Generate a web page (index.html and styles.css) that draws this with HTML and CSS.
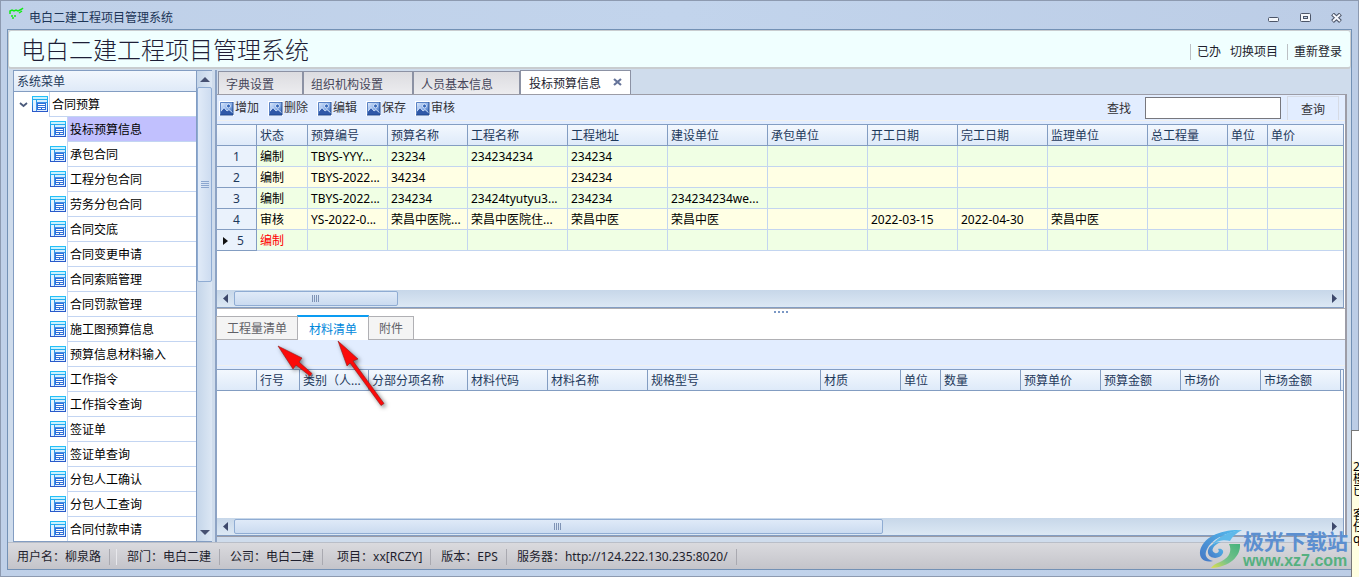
FILE: index.html
```html
<!DOCTYPE html>
<html lang="zh-CN">
<head>
<meta charset="utf-8">
<title>电白二建工程项目管理系统</title>
<link rel="stylesheet" href="styles.css">
</head>
<body>
<svg class="defs" width="0" height="0" aria-hidden="true">
  <defs>
    <linearGradient id="blue" x1="0" y1="0" x2="0" y2="1"><stop offset="0" stop-color="#22c4fa"/><stop offset="1" stop-color="#2a55c8"/></linearGradient>
    <linearGradient id="sky" x1="0" y1="0" x2="1" y2="1"><stop offset="0" stop-color="#e8f1fd"/><stop offset="0.5" stop-color="#8db1ea"/><stop offset="1" stop-color="#2c5cae"/></linearGradient>
    <symbol id="form" viewBox="0 0 16 16">
      <rect width="16" height="16" fill="url(#blue)"/>
      <rect x="1" y="1" width="14" height="2" fill="#c8f2ff"/>
      <rect x="1" y="4" width="3" height="11" fill="#e2f3ff"/>
      <rect x="5" y="4" width="10" height="11" fill="#d5eeff"/>
      <rect x="4" y="6" width="11" height="9" fill="#3c92ea"/>
      <rect x="5" y="7" width="10" height="8" fill="#e0f0ff"/>
      <rect x="5" y="7" width="9" height="7" fill="#2f6fd8"/>
      <rect x="6" y="8" width="7" height="1" fill="#fff"/>
      <rect x="6" y="10" width="7" height="1" fill="#fff"/>
      <rect x="6" y="12" width="3" height="1" fill="#fff"/>
      <rect x="10" y="12" width="3" height="1" fill="#fff"/>
    </symbol>
    <symbol id="picture" viewBox="0 0 15 15">
      <rect width="15" height="15" fill="#fff"/>
      <rect x="1" y="1" width="13" height="13" fill="url(#sky)"/>
      <path d="M1 12l4-5 3 3 2-1 4 4v1H1z" fill="#2f58a8"/>
      <path d="m1 11 4-4.500 3 3.500 2-1.500 4 3.500" fill="none" stroke="#e1edff" stroke-width=".8"/>
      <circle cx="9.500" cy="5" r="2" fill="#3566b8" stroke="#eef5ff" stroke-width=".8"/>
      <path d="M1.500 14V1.500H14" fill="none" stroke="#5c83c4"/>
      <path d="M14 1v13H1" fill="none" stroke="#1c4690"/>
    </symbol>
  </defs>
</svg>
<div class="window">
  <header class="titlebar">
    <svg class="app-icon" width="16" height="16" viewBox="0 0 16 16"><path d="M1 7V4l2-1 2 1 2-1 2 1 2-1 2-1 1-1M10 6l3-2M2 9h2M3 11h2M5 9h2" fill="none" stroke="#12ea16" stroke-width="1.500"/></svg>
    <span class="caption">电白二建工程项目管理系统</span>
    <button class="win-btn" aria-label="最小化"><svg width="12" height="10"><rect x=".5" y="4.500" width="10" height="4" rx="1" fill="#f4f7fb" stroke="#4c5568"/></svg></button>
    <button class="win-btn" aria-label="最大化"><svg width="12" height="10"><rect x=".5" y=".5" width="10" height="8" rx="1" fill="#f4f7fb" stroke="#4c5568"/><rect x="3.500" y="3.500" width="4" height="2" fill="#c5d5eb" stroke="#4c5568"/></svg></button>
    <button class="win-btn" aria-label="关闭"><svg width="12" height="10"><path d="M1.500 1l8 7.500M9.500 1l-8 7.500" stroke="#4c5568" stroke-width="4"/><path d="M2 1.500l7 6.500M9 1.500 2 8" stroke="#f8faff" stroke-width="1.800"/></svg></button>
  </header>
  <div class="frame">
    <div class="banner">
      <h1>电白二建工程项目管理系统</h1>
      <nav class="links"><button class="ruled">已办</button><button>切换项目</button><button class="ruled">重新登录</button></nav>
    </div>
    <div class="body">
      <aside class="sidebar">
        <div class="tree">
          <div class="tree-head">系统菜单</div>
          <ul>
            <li class="root"><svg class="chev" width="9" height="8"><path d="M1 2l3.500 3L8 2" fill="none" stroke="#4b5a7b" stroke-width="1.800"/></svg><svg width="16" height="16"><use href="#form"/></svg><button>合同预算</button></li>
            <li><svg width="16" height="16"><use href="#form"/></svg><button class="selected">投标预算信息</button></li>
            <li><svg width="16" height="16"><use href="#form"/></svg><button>承包合同</button></li>
            <li><svg width="16" height="16"><use href="#form"/></svg><button>工程分包合同</button></li>
            <li><svg width="16" height="16"><use href="#form"/></svg><button>劳务分包合同</button></li>
            <li><svg width="16" height="16"><use href="#form"/></svg><button>合同交底</button></li>
            <li><svg width="16" height="16"><use href="#form"/></svg><button>合同变更申请</button></li>
            <li><svg width="16" height="16"><use href="#form"/></svg><button>合同索赔管理</button></li>
            <li><svg width="16" height="16"><use href="#form"/></svg><button>合同罚款管理</button></li>
            <li><svg width="16" height="16"><use href="#form"/></svg><button>施工图预算信息</button></li>
            <li><svg width="16" height="16"><use href="#form"/></svg><button>预算信息材料输入</button></li>
            <li><svg width="16" height="16"><use href="#form"/></svg><button>工作指令</button></li>
            <li><svg width="16" height="16"><use href="#form"/></svg><button>工作指令查询</button></li>
            <li><svg width="16" height="16"><use href="#form"/></svg><button>签证单</button></li>
            <li><svg width="16" height="16"><use href="#form"/></svg><button>签证单查询</button></li>
            <li><svg width="16" height="16"><use href="#form"/></svg><button>分包人工确认</button></li>
            <li><svg width="16" height="16"><use href="#form"/></svg><button>分包人工查询</button></li>
            <li><svg width="16" height="16"><use href="#form"/></svg><button>合同付款申请</button></li>
          </ul>
        </div>
        <div class="vbar">
          <svg width="14" height="16"><path d="M3 11h10L8 6z" fill="#465172"/></svg>
          <div class="vthumb"><svg width="8" height="8"><path d="M0 .5h8M0 2.500h8M0 4.500h8M0 6.500h8" stroke="#8ba6cf"/></svg></div>
          <svg width="14" height="16"><path d="M3 5h10l-5 5z" fill="#465172"/></svg>
        </div>
      </aside>
      <main>
        <div class="tabs">
          <button>字典设置</button><button class="t2">组织机构设置</button><button class="t3">人员基本信息</button><button class="active">投标预算信息<svg width="9" height="8"><path d="M1 1l7 6M8 1L1 7" stroke="#66749a" stroke-width="2.200"/></svg></button>
        </div>
        <section class="panel">
          <div class="toolbar">
            <button><svg width="15" height="15"><use href="#picture"/></svg>增加</button>
            <button><svg width="15" height="15"><use href="#picture"/></svg>删除</button>
            <button><svg width="15" height="15"><use href="#picture"/></svg>编辑</button>
            <button><svg width="15" height="15"><use href="#picture"/></svg>保存</button>
            <button><svg width="15" height="15"><use href="#picture"/></svg>审核</button>
            <div class="search"><label for="find">查找</label><input id="find" type="text"><button class="query">查询</button></div>
          </div>
          <div class="grid upper">
            <div class="rows">
              <table>
                <colgroup><col class="w40"><col class="w51"><col class="w80"><col class="w80"><col class="w100"><col class="w100"><col class="w100"><col class="w100"><col class="w90"><col class="w90"><col class="w100"><col class="w80"><col class="w40"><col></colgroup>
                <thead><tr><th></th><th>状态</th><th>预算编号</th><th>预算名称</th><th>工程名称</th><th>工程地址</th><th>建设单位</th><th>承包单位</th><th>开工日期</th><th>完工日期</th><th>监理单位</th><th>总工程量</th><th>单位</th><th>单价</th></tr></thead>
                <tbody>
                  <tr><th>1</th><td>编制</td><td>TBYS-YYY...</td><td>23234</td><td>234234234</td><td>234234</td><td></td><td></td><td></td><td></td><td></td><td></td><td></td><td></td></tr>
                  <tr><th>2</th><td>编制</td><td>TBYS-2022...</td><td>34234</td><td></td><td>234234</td><td></td><td></td><td></td><td></td><td></td><td></td><td></td><td></td></tr>
                  <tr><th>3</th><td>编制</td><td>TBYS-2022...</td><td>234234</td><td>23424tyutyu3...</td><td>234234</td><td>234234234we...</td><td></td><td></td><td></td><td></td><td></td><td></td><td></td></tr>
                  <tr><th>4</th><td>审核</td><td>YS-2022-0...</td><td>荣昌中医院...</td><td>荣昌中医院住...</td><td>荣昌中医</td><td>荣昌中医</td><td></td><td>2022-03-15</td><td>2022-04-30</td><td>荣昌中医</td><td></td><td></td><td></td></tr>
                  <tr><th class="current"><svg width="5" height="8"><path d="M0 0v8l5-4z" fill="#111"/></svg>5</th><td class="red">编制</td><td></td><td></td><td></td><td></td><td></td><td></td><td></td><td></td><td></td><td></td><td></td><td></td></tr>
                </tbody>
              </table>
            </div>
            <div class="hbar">
              <svg width="17" height="16"><path d="M11 4v9L6 8.500z" fill="#3d486b"/></svg>
              <div class="track"><div class="hthumb short"><svg width="8" height="7"><path d="M.5 0v7M2.500 0v7M4.500 0v7M6.500 0v7" stroke="#7f93b5"/></svg></div></div>
              <svg width="17" height="16"><path d="M6 4v9l5-4.500z" fill="#3d486b"/></svg>
            </div>
          </div>
          <div class="splitter"><i></i><i></i><i></i><i></i></div>
          <div class="subtabs"><button class="s1">工程量清单</button><button class="s2">材料清单</button><button class="s3">附件</button></div>
          <div class="toolbar blank"></div>
          <div class="grid lower">
            <div class="rows">
              <table>
                <colgroup><col class="w40"><col class="w43"><col class="w69"><col class="w99"><col class="w80"><col class="w100"><col class="w173"><col class="w80"><col class="w40"><col class="w80"><col class="w80"><col class="w80"><col class="w80"><col class="w80"><col></colgroup>
                <thead><tr><th></th><th>行号</th><th>类别（人...</th><th>分部分项名称</th><th>材料代码</th><th>材料名称</th><th>规格型号</th><th>材质</th><th>单位</th><th>数量</th><th>预算单价</th><th>预算金额</th><th>市场价</th><th>市场金额</th><th></th></tr></thead>
              </table>
            </div>
            <div class="hbar">
              <svg width="17" height="16"><path d="M11 4v9L6 8.500z" fill="#3d486b"/></svg>
              <div class="track"><div class="hthumb long"><svg width="8" height="7"><path d="M.5 0v7M2.500 0v7M4.500 0v7M6.500 0v7" stroke="#7f93b5"/></svg></div></div>
              <svg width="17" height="16"><path d="M6 4v9l5-4.500z" fill="#3d486b"/></svg>
            </div>
          </div>
        </section>
      </main>
    </div>
    <footer class="status">
      <span class="user">用户名：柳泉路</span><span class="dept">部门：电白二建</span><span>公司：电白二建</span><span class="proj">项目：xx[RCZY]</span><span>版本：EPS</span><span>服务器：http://124.222.130.235:8020/</span>
    </footer>
  </div>
</div>

<svg class="arrows" width="120" height="76" viewBox="274 338 120 76" aria-hidden="true">
  <g fill="#fb0a0a" stroke="#8d1a1a" stroke-width=".6">
    <path d="M278 346l24 12-3 4 13 11.500-2 2.500-14-11-3 4z"/>
    <path d="M338 341l20 18-5 2 31 42.500-3 2L350 363l-3 3z"/>
  </g>
</svg>

<div class="watermark" aria-hidden="true">
  <svg width="44" height="42" viewBox="0 0 44 42">
    <defs>
      <linearGradient id="wb" x1="1" y1="0" x2="0" y2="1"><stop offset="0" stop-color="#54bff0"/><stop offset="1" stop-color="#4577c5"/></linearGradient>
      <linearGradient id="wg" x1="1" y1="0" x2="0" y2="1"><stop offset="0" stop-color="#45b27c"/><stop offset=".6" stop-color="#79c28a"/><stop offset="1" stop-color="#dfe04a"/></linearGradient>
    </defs>
    <path d="M43 2C22 1 4 9 1 23c-1 8 5 12 13 10C7 31 5 27 8 21 12 12 25 5 43 2z" fill="url(#wb)"/>
    <path d="M22 14c-9 0-14 6-13 11 1 6 12 7 15 0 1-3-2-5-5-4 2 2 0 5-3 4-5-2-2-8 6-11z" fill="url(#wb)"/>
    <path d="M30 16h11c1 12-10 23-29 24 3-4 7-5 11-7 8-4 10-11 7-17z" fill="url(#wg)"/>
    <path d="M43 2C31 3 18 9 13 17c8-6 14-5 18-4 2-4 6-8 12-11z" fill="#5eb9ea"/>
  </svg>
  <div class="wm-text"><span class="wm-name">极光下载站</span><span class="wm-url">www.xz7.com</span></div>
</div>

<div class="popup"><p>2</p><p>樓</p><p>已</p><p class="gap">客</p><p>任</p><p>q</p></div>
</body>
</html>
```
FILE: styles.css
```css
* { box-sizing: border-box; }
body {
  margin: 0;
  overflow: hidden;
  font: 12px/16px "Noto Sans", "Noto Sans CJK SC", sans-serif;
  color: #1e1e2d;
}
svg { display: block; flex: none; }
.defs { position: absolute; }
button { font: inherit; color: inherit; background: none; border: 0; padding: 0; margin: 0; white-space: nowrap; text-align: left; }
h1, ul, p { margin: 0; padding: 0; }

.window {
  height: 100vh;
  display: flex;
  flex-direction: column;
  padding: 0 7px 7px;
  border: 1px solid #8d9ab0;
  background: linear-gradient(90deg, #bfd0e8, #c2d4ec 50%, #bccde6);
}
.titlebar { display: flex; align-items: center; height: 28px; padding: 6px 0 0; flex: none; }
.app-icon { margin: 0 4px 6px 1px; }
.caption { flex: 1; color: #1d3557; }
.win-btn { width: 32px; display: flex; justify-content: center; }
.win-btn:last-child { width: 29px; }

.frame { flex: 1; min-height: 0; display: flex; flex-direction: column; border: 1px solid #7391b5; margin: 0 -1px -1px; background: #cfdcec; }
.banner {
  height: 39px; flex: none;
  display: flex; align-items: center; justify-content: space-between;
  padding: 2px 8px 0 12px;
  background: #f0ffff;
  border: 1px solid #c9cdd0;
  border-width: 1px 1px 2px;
  border-radius: 3px;
}
.banner h1 { font-size: 24px; line-height: 32px; font-weight: 300; color: #1e1e37; }
.links { display: flex; gap: 9px; padding-top: 3px; }
.ruled { border-left: 1px solid #bcc0c4; padding-left: 6px; }

.body { flex: 1; min-height: 0; display: flex; gap: 3px; padding: 1px 4px 0 5px; }
.sidebar { width: 199px; flex: none; display: flex; border: 1px solid #839dc2; border-width: 1px 0; }
.tree { flex: 1; min-width: 0; overflow: hidden; border: 1px solid #839dc2; border-width: 0 1px; background: #fff; }
.tree-head { height: 21px; padding: 3px 3px 0; color: #1e395b; background: linear-gradient(#f2f7fd, #dfeaf8); border-bottom: 1px solid #839dc2; }
.tree ul { list-style: none; }
.tree li { display: flex; height: 25px; padding-left: 36px; }
.tree li.root { padding-left: 5px; }
.tree li > svg { margin-top: 4px; }
.tree li .chev { margin: 9px 4px 0 0; }
.tree button { flex: 1; margin-left: 1px; padding: 2px 2px 0; border: 1px solid #c3d5f2; border-width: 0 0 1px 1px; color: #000; }
.tree button.selected { background: #c1c0fe; }
.vbar { width: 15px; display: flex; flex-direction: column; background: linear-gradient(90deg, #c4d5e9, #dce7f4); }
.vthumb { height: 195px; display: flex; align-items: center; justify-content: center; border: 1px solid #8facd3; border-radius: 2px; background: linear-gradient(90deg, #e1ebf8, #cddcf0); }
.vbar > svg:last-child { margin-top: auto; }

main { flex: 1; min-width: 0; display: flex; flex-direction: column; border-left: 2px solid #8da3c4; padding-bottom: 5px; }
.tabs { height: 24px; flex: none; display: flex; align-items: flex-end; padding-left: 1px; }
.tabs button { height: 23px; width: 85px; padding: 3px 7px 0; border: 1px solid #8c92a4; border-width: 1px 1px 0; color: #46465a; background: linear-gradient(#dcdce0, #ececef); }
.tabs .t2 { width: 110px; }
.tabs .t3 { width: 107px; }
.tabs .active { width: 111px; height: 24px; display: flex; align-items: center; gap: 12px; padding: 2px 8px 0; background: #fff; color: #1e1e32; }
.tabs .active svg { margin-bottom: 3px; }
.panel { flex: 1; min-height: 0; display: flex; flex-direction: column; border: 1px solid #9c9ca6; border-width: 1px 2px 1px 0; background: #fff; }
.toolbar { height: 29px; flex: none; display: flex; align-items: flex-start; gap: 8px; padding: 5px 6px 0 2px; background: linear-gradient(#e2edff 25px, #f0f0ee 25px, #f0f0ee 26px, #e2edff 26px); color: #323237; }
.toolbar > button { display: flex; align-items: center; gap: 1px; }
.toolbar > button + button { padding-left: 1px; }
.search { display: flex; align-items: center; margin: -4px 0 0 auto; }
.search label, .query { padding-top: 2px; }
.search input { width: 136px; height: 22px; margin: 0 6px 0 14px; border: 1px solid #77777d; background: #fff; padding: 0 4px; font: inherit; }
.query { height: 24px; width: 52px; text-align: center; border: 1px solid #d6dbe5; border-bottom: 0; }
.grid { display: flex; flex-direction: column; border: 1px solid #839dc2; margin-right: 1px; border-left: 0; }
.upper { flex: none; height: 184px; }
.lower { flex: 1; min-height: 0; }
.rows { flex: 1; min-height: 0; overflow: hidden; }
table { width: 100%; table-layout: fixed; border-collapse: separate; border-spacing: 0; color: #000; }
th, td { height: 21px; padding: 2px 3px 0; border: 1px solid #c3d5f0; border-width: 0 1px 1px 0; white-space: nowrap; overflow: hidden; text-align: left; font-weight: 400; }
tr > :last-child { border-right: 0; }
thead th { color: #1e395b; border-color: #839dc2; background: linear-gradient(#f3f8fe, #deeaf9); }
tbody th { text-align: center; color: #1e395b; background: #eaf2fc; border-color: #839dc2; }
tbody tr:nth-child(odd) td { background: #f0ffe4; }
tbody tr:nth-child(even) td { background: #ffffe4; }
tbody th.current { padding: 2px 0 0 6px; text-align: left; }
.current svg { display: inline-block; margin-right: 9px; }
tbody td.red { color: #f00; }
.w40 { width: 40px; } .w43 { width: 43px; } .w51 { width: 51px; } .w69 { width: 69px; }
.w80 { width: 80px; } .w90 { width: 90px; } .w99 { width: 99px; } .w100 { width: 100px; } .w173 { width: 173px; }
.hbar { height: 17px; flex: none; display: flex; background: linear-gradient(#c7d7e9, #dce8f4); }
.track { flex: 1; }
.hthumb { height: 15px; margin-top: 1px; display: flex; align-items: center; justify-content: center; border: 1px solid #8facd3; border-radius: 2px; background: linear-gradient(#dfeaf8, #cbdbf0); }
.short { width: 15%; }
.long { width: 59.400%; }
.splitter { height: 7px; flex: none; display: flex; justify-content: center; gap: 2px; padding-top: 2px; border-top: 1px solid #adadb2; }
.splitter i { width: 2px; height: 2px; background: #7b98c5; }
.subtabs { height: 25px; flex: none; display: flex; align-items: flex-end; margin-left: -1px; border-bottom: 1px solid #b0b0b4; }
.subtabs button { height: 23px; padding-top: 2px; text-align: center; background: #f4f4f4; border: 1px solid #b0b0b4; border-bottom: 0; color: #606066; }
.subtabs .s1 { width: 81px; border-right: 0; }
.subtabs .s2 { width: 72px; height: 25px; margin-bottom: -1px; background: #fff; border-top: 2px solid #0a9cf2; color: #0088dc; }
.subtabs .s3 { width: 45px; border-left: 0; }

.status { height: 27px; flex: none; display: flex; align-items: center; padding: 2px 0 0 1px; border-top: 1px solid #b9bec8; background: linear-gradient(#dadade, #c4c4ca); color: #1e1e2d; }
.status span { padding: 0 8px 0 10px; border-right: 1px solid #a9a9b0; }
.status .user { padding-left: 8px; }
.status .dept { margin-left: 6px; border-left: 1px solid #e8e8ec; }
.status .proj { padding-left: 14px; }

.arrows { position: absolute; left: 274px; top: 338px; filter: drop-shadow(2px 2px 2px rgba(0, 0, 0, .5)); pointer-events: none; }
.watermark { position: absolute; right: 11px; bottom: 7px; display: flex; align-items: flex-end; pointer-events: none; }
.wm-text { display: flex; flex-direction: column; }
.wm-name { font: 700 21px/24px "Noto Sans CJK SC", sans-serif; color: #5c8fd0; }
.wm-url { font: 700 16px/18px "Liberation Sans", sans-serif; color: #55b080; }
.popup { position: absolute; right: 0; bottom: 0; width: 8px; height: 147px; overflow: hidden; padding: 30px 0 0 1px; border: 1px solid #777; border-width: 1px 0 0 1px; background: linear-gradient(#fff 30px, #ffffe1 30px); color: #000; }
.popup p { line-height: 12px; }
.popup .gap { margin-top: 12px; }
```
